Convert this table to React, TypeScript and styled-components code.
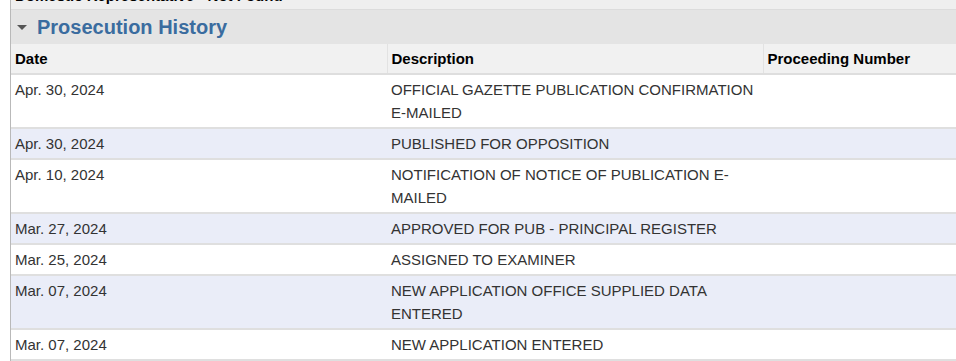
import React from "react";
import styled, { createGlobalStyle } from "styled-components";

const GlobalStyle = createGlobalStyle`
  html, body {
    margin: 0;
    padding: 0;
    background: #ffffff;
    overflow: hidden;
  }
  body {
    font-family: "Liberation Sans", Arial, sans-serif;
  }
`;

const entries = [
  { date: "Apr. 30, 2024", desc: "OFFICIAL GAZETTE PUBLICATION CONFIRMATION E-MAILED", num: "" },
  { date: "Apr. 30, 2024", desc: "PUBLISHED FOR OPPOSITION", num: "" },
  { date: "Apr. 10, 2024", desc: "NOTIFICATION OF NOTICE OF PUBLICATION E-MAILED", num: "" },
  { date: "Mar. 27, 2024", desc: "APPROVED FOR PUB - PRINCIPAL REGISTER", num: "" },
  { date: "Mar. 25, 2024", desc: "ASSIGNED TO EXAMINER", num: "" },
  { date: "Mar. 07, 2024", desc: "NEW APPLICATION OFFICE SUPPLIED DATA ENTERED", num: "" },
  { date: "Mar. 07, 2024", desc: "NEW APPLICATION ENTERED", num: "" },
];

export default function App() {
  return (
    <>
      <GlobalStyle />
      <Page>
        <FieldRow>Domestic Representative - Not Found</FieldRow>
        <SectionHeader>
          <Caret />
          <SectionTitle>Prosecution History</SectionTitle>
        </SectionHeader>
        <Table>
          <thead>
            <tr>
              <Th>Date</Th>
              <Th>Description</Th>
              <Th>Proceeding Number</Th>
            </tr>
          </thead>
          <tbody>
            {entries.map((e, i) => (
              <Row key={i} $alt={i % 2 === 1}>
                <Td>{e.date}</Td>
                <Td>{e.desc}</Td>
                <Td>{e.num}</Td>
              </Row>
            ))}
          </tbody>
        </Table>
      </Page>
    </>
  );
}

const Page = styled.div`
  margin-left: 10px;
  margin-top: -16px;
  width: 1128px;
  border-left: 1px solid #b9b9b9;
  background: #efefef;
`;

const FieldRow = styled.div`
  height: 26px;
  line-height: 23px;
  padding-left: 4px;
  font-size: 15px;
  font-weight: bold;
  color: #000;
  border-bottom: 1px solid #dcdcdc;
  box-sizing: border-box;
`;

const SectionHeader = styled.div`
  display: flex;
  align-items: center;
  height: 34px;
  background: #e4e4e4;
  padding-left: 6px;
`;

const Caret = styled.span`
  width: 0;
  height: 0;
  border-left: 5px solid transparent;
  border-right: 5px solid transparent;
  border-top: 5px solid #555;
  margin-right: 10px;
  margin-top: 1px;
`;

const SectionTitle = styled.h2`
  margin: 0;
  font-size: 20px;
  font-weight: bold;
  color: #3a6c9f;
  line-height: 24px;
`;

const Table = styled.table`
  width: 100%;
  border-collapse: collapse;
  table-layout: fixed;
  font-size: 15px;
`;

const Th = styled.th`
  text-align: left;
  font-weight: bold;
  color: #000;
  background: #f1f1f1;
  height: 30px;
  padding: 0 4px;
  border-bottom: 2px solid #dedede;
  border-left: 1px solid #e2e2e2;
  box-sizing: border-box;
  &:first-child {
    border-left: none;
  }
`;

const Row = styled.tr<{ $alt: boolean }>`
  background: ${(p) => (p.$alt ? "#eaedf8" : "#ffffff")};
  border-bottom: 2px solid #dfdfdf;
`;

const Td = styled.td`
  vertical-align: top;
  color: #333;
  line-height: 23px;
  padding: 3px 4px;
  word-wrap: break-word;
`;
